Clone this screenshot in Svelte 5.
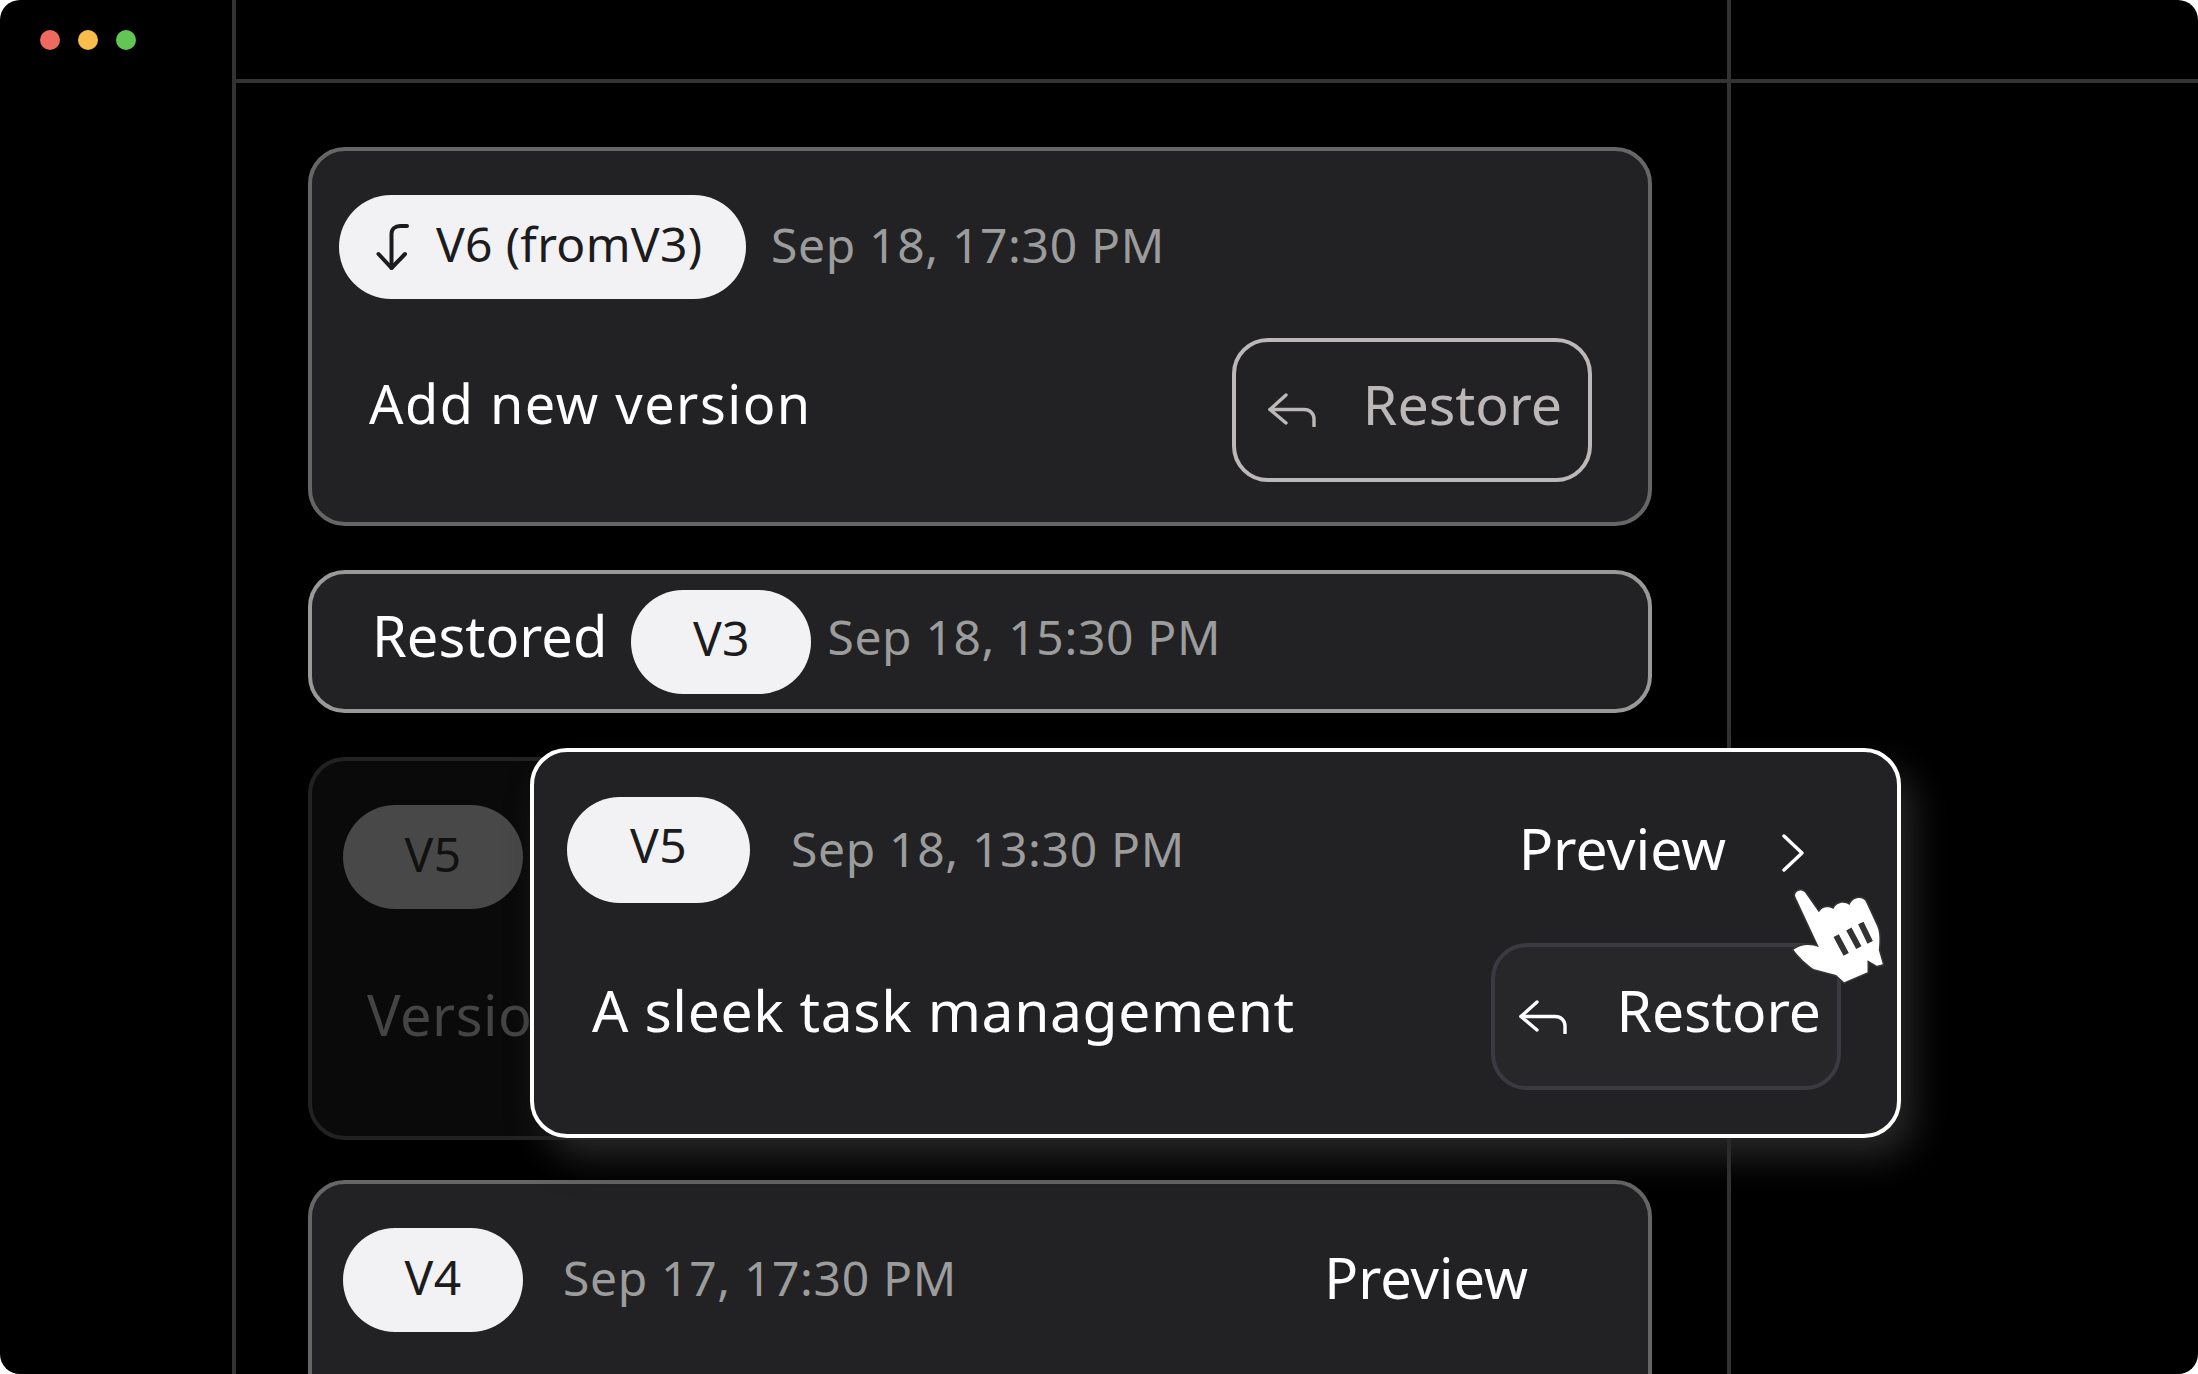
<script>
    const stage_height = 1374;
</script>

{#snippet replyIcon()}
    <svg class="reply-icon" viewBox="0 0 48 34" fill="none" stroke="currentColor" stroke-width="3.4" stroke-linecap="round" stroke-linejoin="round">
        <path d="M18 2L2 16.5L18 30"/>
        <path d="M2 16.5H36C42 16.5 46 20.5 46 26V33"/>
    </svg>
{/snippet}

<div class="window" style:height="{stage_height}px">
    <aside class="sidebar">
        <div class="traffic">
            <span class="dot red"></span>
            <span class="dot yellow"></span>
            <span class="dot green"></span>
        </div>
    </aside>

    <div class="workspace">
        <div class="top-left"></div>
        <div class="top-right"></div>

        <main class="content">
            <section class="card card-current">
                <div class="head">
                    <span class="pill pill-wide">
                        <svg class="from-icon" viewBox="0 0 36 48" fill="none" stroke="currentColor" stroke-width="4" stroke-linecap="round" stroke-linejoin="round">
                            <path d="M32 3H25C20 3 16.5 6 16.5 11V45"/>
                            <path d="M3.5 31L16.5 45L30 31"/>
                        </svg>
                        <span class="pill-text">V6 (fromV3)</span>
                    </span>
                    <span class="date">Sep 18, 17:30 PM</span>
                </div>
                <div class="body">
                    <span class="title">Add new version</span>
                    <button class="restore restore-outline">
                        {@render replyIcon()}
                        <span class="restore-text">Restore</span>
                    </button>
                </div>
            </section>

            <section class="card card-restored">
                <span class="restored-label">Restored</span>
                <span class="pill"><span class="pill-text">V3</span></span>
                <span class="date">Sep 18, 15:30 PM</span>
            </section>

            <section class="card card-dim">
                <div class="head">
                    <span class="pill"><span class="pill-text">V5</span></span>
                </div>
                <div class="body">
                    <span class="title">Version</span>
                </div>
            </section>

            <section class="card card-next">
                <div class="head">
                    <span class="pill"><span class="pill-text">V4</span></span>
                    <span class="date">Sep 17, 17:30 PM</span>
                    <span class="preview">Preview</span>
                </div>
            </section>
        </main>

        <div class="inspector"></div>
    </div>

    <section class="card card-float">
        <div class="head">
            <span class="pill"><span class="pill-text">V5</span></span>
            <span class="date">Sep 18, 13:30 PM</span>
            <span class="preview">
                Preview
                <svg class="chevron" viewBox="0 0 22 38" fill="none" stroke="currentColor" stroke-width="3.4" stroke-linecap="round" stroke-linejoin="round">
                    <path d="M2 2L20 19L2 36"/>
                </svg>
            </span>
        </div>
        <div class="body">
            <span class="title">A sleek task management</span>
            <button class="restore restore-hover">
                {@render replyIcon()}
                <span class="restore-text">Restore</span>
            </button>
        </div>
    </section>

    <svg class="cursor" viewBox="990 320 290 300">
        <path class="cursor-hand" d="M1006 350C1000 336 1020 322 1034 336L1076 396C1084 380 1104 376 1120 386C1128 366 1152 362 1168 374C1176 352 1204 346 1216 362L1252 440C1260 460 1258 490 1256 510L1268 552L1250 556L1222 540L1222 576L1152 606L1128 584L1060 566C1040 552 1016 530 1000 508C1020 492 1050 490 1076 500Z"/>
        <path class="cursor-bars" d="M1128 466L1158 522M1166 446L1196 502M1202 428L1230 486"/>
    </svg>
</div>

<style>
    :global(body) {
        margin: 0;
        background: #fff;
    }

    .window {
        position: relative;
        display: flex;
        overflow: hidden;
        background: #000;
        border-radius: 20px;
        font-family: "Noto Sans", sans-serif;
        color: #fff;
    }

    .sidebar {
        box-sizing: border-box;
        flex: 0 0 236px;
        border-right: 4px solid #333;
    }

    .traffic {
        display: flex;
        gap: 18px;
        padding: 30px 0 0 40px;
    }

    .dot {
        width: 20px;
        height: 20px;
        border-radius: 50%;
    }

    .red { background: #ee6a5f; }
    .yellow { background: #f9bd4f; }
    .green { background: #62c554; }

    .workspace {
        flex: 1;
        display: grid;
        grid-template-columns: 1495px 1fr;
        grid-template-rows: 83px 1fr;
        min-height: 0;
    }

    .top-left,
    .top-right {
        border-bottom: 4px solid #333;
    }

    .top-left,
    .content {
        border-right: 4px solid #333;
    }

    .content {
        display: flex;
        flex-direction: column;
        gap: 44px;
        padding: 64px 0 0 72px;
        min-height: 0;
    }

    .card {
        box-sizing: border-box;
        flex: none;
        width: 1344px;
        background: #222224;
        border: 4px solid #666;
        border-radius: 37px;
    }

    .head,
    .body {
        display: flex;
        align-items: center;
    }

    .pill {
        box-sizing: border-box;
        display: inline-flex;
        align-items: center;
        justify-content: center;
        width: 180px;
        height: 104px;
        border-radius: 52px;
        background: #f2f2f4;
        color: #1c1c1e;
        font-size: 48px;
        letter-spacing: 0.3px;
    }

    .pill-text {
        margin-bottom: 8px;
    }

    .date {
        margin-bottom: 6px;
        color: #9c9c9c;
        font-size: 48px;
        letter-spacing: 0.65px;
    }

    .title {
        margin-bottom: 14px;
        font-size: 54px;
        letter-spacing: 1.5px;
    }

    .preview {
        display: inline-flex;
        align-items: center;
        font-size: 57px;
    }

    .restore {
        box-sizing: border-box;
        display: flex;
        align-items: center;
        justify-content: space-between;
        margin-left: auto;
        border-radius: 36px;
        font: inherit;
        background: none;
    }

    .restore-text {
        margin-bottom: 14px;
    }

    .reply-icon {
        width: 48px;
        height: 34px;
        flex: none;
    }

    .card-current {
        height: 379px;
        padding: 44px 56px 0 27px;
    }

    .card-current .date {
        margin-left: 25px;
    }

    .card-current .body {
        margin-top: 39px;
        padding-left: 30px;
    }

    .pill-wide {
        width: 407px;
        justify-content: flex-start;
        gap: 25px;
        padding-left: 36px;
    }

    .from-icon {
        width: 36px;
        height: 48px;
        flex: none;
    }

    .restore-outline {
        width: 360px;
        height: 144px;
        padding: 0 26px 0 32px;
        border: 4px solid #bdb8b8;
        color: #bdb8b8;
        font-size: 55.5px;
    }

    .card-restored {
        display: flex;
        align-items: center;
        height: 143px;
        padding-left: 60px;
        border-color: #999;
    }

    .restored-label {
        font-size: 56px;
        margin: 0 24px 14px 0;
    }

    .card-restored .date {
        margin: 0 0 11px 16px;
    }

    .card-dim {
        height: 383px;
        padding: 44px 0 0 31px;
        background: #0a0a0a;
        border-color: #222;
    }

    .card-dim .pill {
        background: #484848;
        color: #111;
    }

    .card-dim .body {
        height: 147px;
        margin-top: 39px;
        padding-left: 24px;
    }

    .card-dim .title {
        margin-bottom: 16px;
        color: #444;
        font-size: 56px;
        letter-spacing: 0.5px;
    }

    .card-next {
        padding: 44px 0 0 31px;
        height: 360px;
        margin-top: -4px;
    }

    .card-next .date {
        margin-left: 40px;
    }

    .card-next .preview {
        margin: 0 120px 6px auto;
        font-size: 56px;
    }

    .card-float {
        position: absolute;
        left: 530px;
        top: 748px;
        width: 1371px;
        height: 390px;
        padding: 45px 56px 0 33px;
        border-color: #fff;
        box-shadow: 14px 20px 36px -2px #282828;
    }

    .card-float .pill {
        width: 183px;
        height: 106px;
        border-radius: 53px;
    }

    .card-float .pill-text {
        margin-bottom: 12px;
    }

    .card-float .date {
        margin: 0 0 4px 41px;
    }

    .card-float .preview {
        margin: 0 37px 4px auto;
        gap: 56px;
    }

    .chevron {
        width: 22px;
        height: 38px;
        margin-top: 10px;
    }

    .card-float .body {
        margin-top: 40px;
        padding-left: 25px;
    }

    .card-float .title {
        margin-bottom: 14px;
        font-size: 57px;
        letter-spacing: 0.6px;
    }

    .restore-hover {
        width: 350px;
        height: 147px;
        padding: 0 16px 0 24px;
        border: 4px solid #3a3a40;
        background: #27272a;
        color: #fff;
        font-size: 57px;
    }

    .cursor {
        position: absolute;
        left: 1790px;
        top: 887px;
        width: 97px;
        height: 100px;
        overflow: visible;
    }

    .cursor-hand {
        fill: #fff;
        stroke: #333;
        stroke-width: 10;
        stroke-linejoin: round;
        paint-order: stroke;
    }

    .cursor-bars {
        fill: none;
        stroke: #333;
        stroke-width: 18;
    }
</style>
